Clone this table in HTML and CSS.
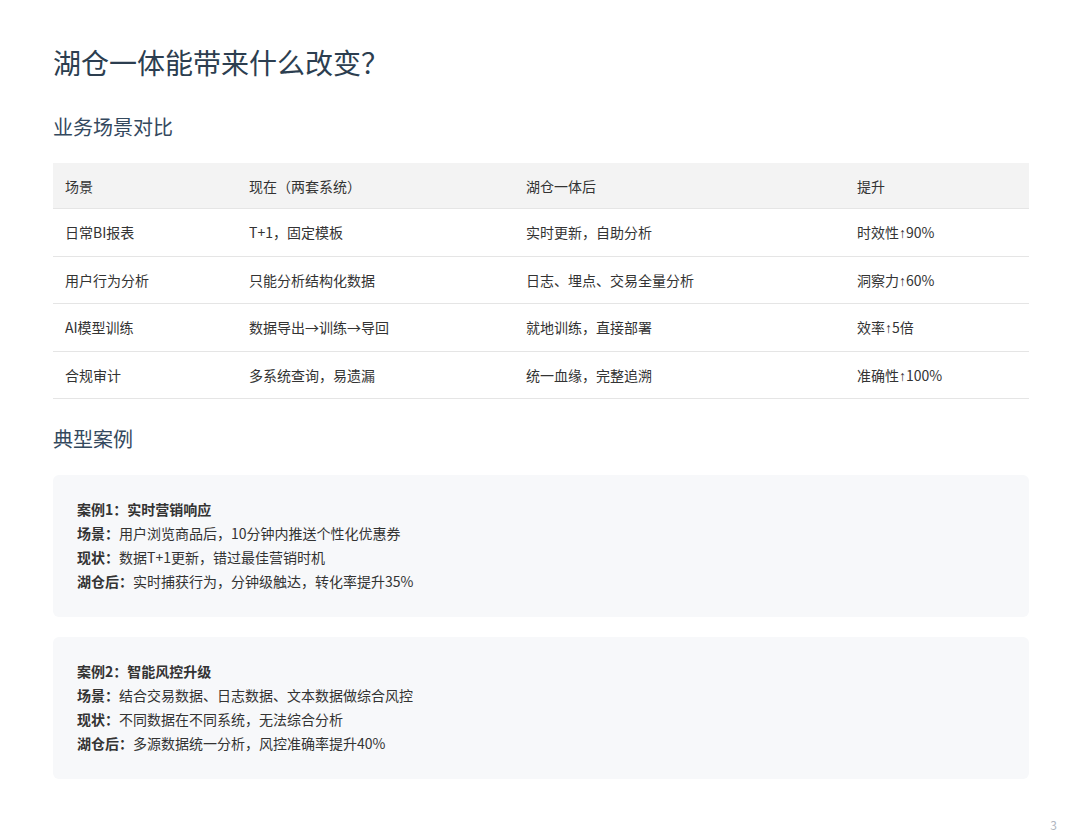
FILE: index.html
```html
<!DOCTYPE html>
<html lang="zh">
<head>
<meta charset="utf-8">
<link rel="stylesheet" href="styles.css">
</head>
<body>
<div class="slide">
  <h1 class="title">湖仓一体能带来什么改变？</h1>
  <h2 class="subtitle">业务场景对比</h2>
  <table class="compare">
    <thead>
      <tr><th>场景</th><th>现在（两套系统）</th><th>湖仓一体后</th><th>提升</th></tr>
    </thead>
    <tbody>
      <tr><td>日常BI报表</td><td>T+1，固定模板</td><td>实时更新，自助分析</td><td>时效性<span class="arr">↑</span>90%</td></tr>
      <tr><td>用户行为分析</td><td>只能分析结构化数据</td><td>日志、埋点、交易全量分析</td><td>洞察力<span class="arr">↑</span>60%</td></tr>
      <tr><td>AI模型训练</td><td>数据导出→训练→导回</td><td>就地训练，直接部署</td><td>效率<span class="arr">↑</span>5倍</td></tr>
      <tr><td>合规审计</td><td>多系统查询，易遗漏</td><td>统一血缘，完整追溯</td><td>准确性<span class="arr">↑</span>100%</td></tr>
    </tbody>
  </table>
  <h2 class="subtitle cases-title">典型案例</h2>
  <div class="case">
    <p><b>案例1：实时营销响应</b></p>
    <p><b>场景：</b>用户浏览商品后，10分钟内推送个性化优惠券</p>
    <p><b>现状：</b>数据T+1更新，错过最佳营销时机</p>
    <p><b>湖仓后：</b>实时捕获行为，分钟级触达，转化率提升35%</p>
  </div>
  <div class="case">
    <p><b>案例2：智能风控升级</b></p>
    <p><b>场景：</b>结合交易数据、日志数据、文本数据做综合风控</p>
    <p><b>现状：</b>不同数据在不同系统，无法综合分析</p>
    <p><b>湖仓后：</b>多源数据统一分析，风控准确率提升40%</p>
  </div>
  <div class="page-num">3</div>
</div>
</body>
</html>
```

FILE: styles.css
```css
html, body {
  margin: 0;
  padding: 0;
  background: #ffffff;
}
body {
  font-family: "Noto Sans CJK SC", "Noto Sans", sans-serif;
  color: #333333;
}
.slide {
  position: relative;
  width: 1080px;
  height: 832px;
  box-sizing: border-box;
  padding: 40px 51px 0 53px;
}
.title {
  margin: 0;
  font-size: 28px;
  font-weight: 400;
  line-height: 44px;
  color: #2c3e50;
}
.subtitle {
  margin: 28px 0 0 0;
  font-size: 20px;
  font-weight: 400;
  line-height: 30px;
  color: #34495e;
}
.compare {
  margin-top: 21px;
  width: 100%;
  border-collapse: collapse;
  font-size: 14px;
  color: #333333;
}
.compare th, .compare td {
  text-align: left;
  font-weight: 400;
  padding: 0 12px;
  height: 46.5px;
  border-bottom: 1px solid #e5e5e5;
}
.compare th {
  background: #f3f3f3;
  height: 45px;
}
.compare th:nth-child(1) { width: 160px; }
.compare th:nth-child(2) { width: 253px; }
.compare th:nth-child(3) { width: 307px; }
.arr {
  font-family: "Liberation Sans", "DejaVu Sans", sans-serif;
}
.cases-title {
  margin-top: 25px;
}
.case {
  margin-top: 21px;
  background: #f7f8fa;
  border-radius: 6px;
  padding: 22px 24px 24px 24px;
  font-size: 14px;
  line-height: 24px;
  color: #333333;
}
.case + .case {
  margin-top: 20px;
}
.case p {
  margin: 0;
}
.case b {
  font-weight: 700;
}
.page-num {
  position: absolute;
  right: 23px;
  bottom: 0;
  font-size: 12px;
  color: #b0b6bf;
  line-height: 14px;
}
```
